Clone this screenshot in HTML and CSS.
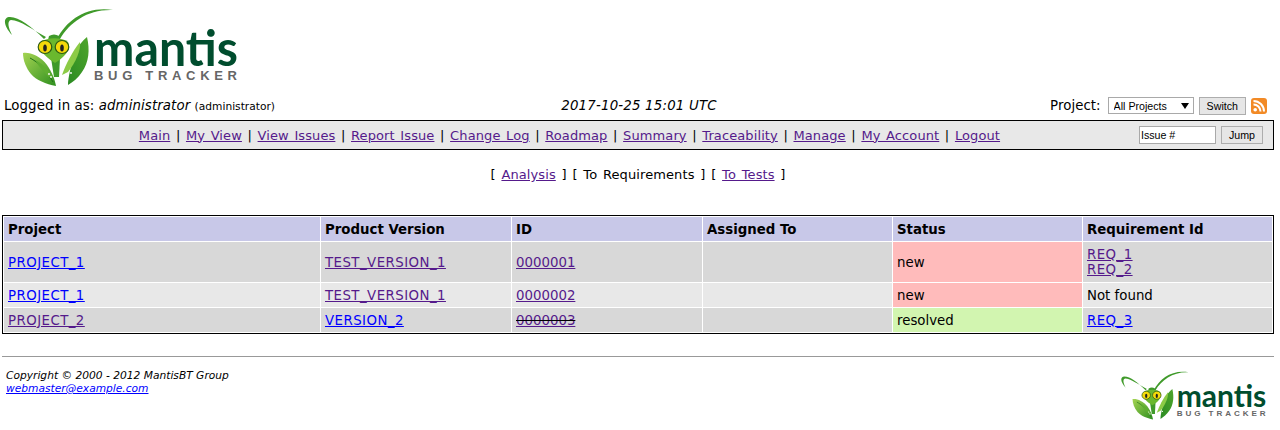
FILE: index.html
```html
<!DOCTYPE html>
<html lang="en">
<head>
<meta charset="utf-8">
<title>Mantis Bug Tracker</title>
<link rel="stylesheet" href="styles.css">
</head>
<body>
<header class="logo-row">
  <svg class="logo logo-big" viewBox="0 0 242 90" role="img" aria-label="Mantis Bug Tracker">
    <defs>
      <linearGradient id="leaf" x1="0" y1="0" x2="1" y2="1">
        <stop offset="0" stop-color="#a4d452"/>
        <stop offset="1" stop-color="#2f8f1f"/>
      </linearGradient>
      <linearGradient id="leaf2" x1="1" y1="0" x2="0" y2="1">
        <stop offset="0" stop-color="#4fa52c"/>
        <stop offset="1" stop-color="#2a8a22"/>
      </linearGradient>
      <g id="mantis-art">
        <path d="M44 39C32 27 19 17 10 17C3 17 3 25 12 35C8 27 7 21 11 20C20 20 33 30 46 37Z" fill="#3f9a2a"/>
        <path d="M57 39C67 20 86 6 113 10C88 9 70 22 60 39Z" fill="#3f9a2a"/>
        <path d="M23 53C30 52 40 56 47 65C52 72 55 80 56 86C46 84 36 80 31 74C26 68 23 60 23 53Z" fill="url(#leaf)"/>
        <path d="M30 58C38 62 46 70 53 82" stroke="#1f6e1a" stroke-width="1" fill="none"/>
        <path d="M87 37C90 50 89 62 82 72C78 78 73 82 68 85C68 78 71 65 75 53C78 46 82 41 87 37Z" fill="url(#leaf2)"/>
        <path d="M62 75C66 64 72 52 80 42C81 50 76 62 68 72Z" fill="#8ccb46"/>
        <path d="M51 58L60 58L59 77L54 77Z" fill="#3f9a2a"/>
        <path d="M35 60C42 63 49 70 53 77L49 77C44 72 39 67 35 60Z" fill="#5fae30"/>
        <path d="M49 36Q54 33 59 36L60 40L48 40Z" fill="#3f9a2a"/>
        <path d="M41 42C47 37 62 37 68 42C72 50 63 58 55 63C47 58 37 50 41 42Z" fill="#6ab82e"/>
        <ellipse cx="45" cy="47" rx="6.800" ry="6.500" fill="#f5d90a" stroke="#2d5b12" stroke-width="1.200"/>
        <ellipse cx="62" cy="47" rx="6.800" ry="6.500" fill="#f5d90a" stroke="#2d5b12" stroke-width="1.200"/>
        <ellipse cx="45" cy="48" rx="1.800" ry="3.600" fill="#222"/>
        <ellipse cx="62" cy="48" rx="1.800" ry="3.600" fill="#222"/>
        <circle cx="49" cy="74" r="0.900" fill="#fff"/>
        <circle cx="51" cy="77" r="0.900" fill="#fff"/>
        <circle cx="71" cy="73" r="0.900" fill="#fff"/>
        <text class="logo-word" x="94" y="66" textLength="144" lengthAdjust="spacingAndGlyphs">mantis</text>
        <text class="logo-sub" x="94" y="80" textLength="143" lengthAdjust="spacing">BUG TRACKER</text>
      </g>
    </defs>
    <use href="#mantis-art"/>
  </svg>
</header>

<div class="login-row">
  <div class="login">Logged in as: <em>administrator</em> <small>(administrator)</small></div>
  <div class="date">2017-10-25 15:01 UTC</div>
  <form class="project-form">
    <label for="project">Project:</label>
    <span class="select-wrap"><select id="project" class="select"><option>All Projects</option></select></span>
    <button type="button" class="btn">Switch</button>
    <svg class="rss" viewBox="0 0 16 16" aria-hidden="true">
      <rect width="16" height="16" rx="3" fill="#f28a26"/>
      <circle cx="4.200" cy="11.800" r="1.800" fill="#fff"/>
      <path d="M2.500 6.500a7 7 0 0 1 7 7M2.500 3a10.500 10.500 0 0 1 10.500 10.500" fill="none" stroke="#fff" stroke-width="2"/>
    </svg>
  </form>
</div>

<nav class="menu">
  <div class="menu-links">
    <a class="v" href="#">Main</a> | <a class="v" href="#">My View</a> | <a class="v" href="#">View Issues</a> | <a class="v" href="#">Report Issue</a> | <a class="v" href="#">Change Log</a> | <a class="v" href="#">Roadmap</a> | <a class="v" href="#">Summary</a> | <a class="v" href="#">Traceability</a> | <a class="v" href="#">Manage</a> | <a class="v" href="#">My Account</a> | <a class="v" href="#">Logout</a>
  </div>
  <form class="jump-form">
    <input class="issue" type="text" value="Issue #">
    <button type="button" class="btn">Jump</button>
  </form>
</nav>

<p class="subnav">[ <a class="v" href="#">Analysis</a> ] [ To Requirements ] [ <a class="v" href="#">To Tests</a> ]</p>

<table class="report">
  <colgroup>
    <col class="c1"><col class="c2"><col class="c2"><col class="c3"><col class="c3"><col>
  </colgroup>
  <thead>
    <tr><th>Project</th><th>Product Version</th><th>ID</th><th>Assigned To</th><th>Status</th><th>Requirement Id</th></tr>
  </thead>
  <tbody>
    <tr class="dark tall">
      <td><a class="b code" href="#">PROJECT_1</a></td>
      <td><a class="v code" href="#">TEST_VERSION_1</a></td>
      <td><a class="v" href="#">0000001</a></td>
      <td></td>
      <td class="new">new</td>
      <td><a class="v code" href="#">REQ_1</a><br><a class="v code" href="#">REQ_2</a></td>
    </tr>
    <tr class="light">
      <td><a class="b code" href="#">PROJECT_1</a></td>
      <td><a class="v code" href="#">TEST_VERSION_1</a></td>
      <td><a class="v" href="#">0000002</a></td>
      <td></td>
      <td class="new">new</td>
      <td>Not found</td>
    </tr>
    <tr class="dark">
      <td><a class="v code" href="#">PROJECT_2</a></td>
      <td><a class="b code" href="#">VERSION_2</a></td>
      <td><s><a class="v" href="#">0000003</a></s></td>
      <td></td>
      <td class="resolved">resolved</td>
      <td><a class="b code" href="#">REQ_3</a></td>
    </tr>
  </tbody>
</table>

<hr class="rule">

<footer class="footer">
  <address class="copy">Copyright © 2000 - 2012 MantisBT Group<br><a class="b" href="#">webmaster@example.com</a></address>
  <svg class="logo logo-small" viewBox="0 0 242 90" role="img" aria-label="Mantis Bug Tracker"><use href="#mantis-art"/></svg>
</footer>
</body>
</html>
```

FILE: styles.css
```css
html, body { background: #fff; }
body {
  margin: 0;
  padding: 0 6px 0 2px;
  font-family: "DejaVu Sans", Verdana, sans-serif;
  font-size: 13.330px;
  color: #000;
  overflow: hidden;
}
a.v { color: #551a8b; }
a.b { color: #0000ff; }
a.code { letter-spacing: 0.450px; }

.logo-row { height: 91px; }
.logo { display: block; }
.logo-big { width: 242px; height: 90px; margin-left: -2px; }
.logo-small { width: 151px; height: 56px; margin: -3px 5px 0 0; }
.logo-word { font-family: Lato, sans-serif; font-weight: 700; font-size: 50px; fill: #004d2e; }
.logo-sub { font-family: "Liberation Sans", sans-serif; font-weight: 700; font-size: 13px; fill: #666; }

.login-row {
  display: grid;
  grid-template-columns: 1fr auto 1fr;
  align-items: center;
  height: 29px;
  padding-left: 2px;
}
.login { letter-spacing: 0.100px; white-space: nowrap; }
.login small { font-size: 10.670px; letter-spacing: 0; }
.date { font-style: italic; letter-spacing: 0.200px; }
.project-form {
  display: flex;
  align-items: center;
  justify-content: flex-end;
  padding-right: 7px;
}
.project-form label { margin-right: 7px; letter-spacing: 0.050px; }
.select-wrap { position: relative; display: block; height: 17px; margin-right: 5px; }
.select-wrap::after {
  content: "";
  position: absolute;
  top: 6px;
  right: 5px;
  border-style: solid;
  border-width: 6px 4px 0;
  border-color: #000 transparent transparent;
}
.select {
  display: block;
  appearance: none;
  width: 86px;
  height: 17px;
  padding: 0 0 0 5px;
  font: 10.670px "Liberation Sans", sans-serif;
  color: #000;
  background: #fff;
  border: 1px solid #a9a9a9;
  border-radius: 0;
}
.btn {
  height: 18px;
  padding: 0 7px;
  font: 10.670px "Liberation Sans", sans-serif;
  color: #000;
  background: #e6e6e6;
  border: 1px solid #adadad;
  border-radius: 0;
}
.rss { width: 16px; height: 16px; margin-left: 5px; }

.menu {
  display: flex;
  align-items: center;
  height: 28px;
  background: #e8e8e8;
  border: 1px solid #000;
}
.menu-links { flex: 1; padding-right: 3px; text-align: center; font-size: 13px; letter-spacing: 0.100px; word-spacing: 1.350px; }
.jump-form {
  display: flex;
  align-items: center;
  gap: 5px;
  padding-right: 10px;
}
.issue {
  box-sizing: border-box;
  width: 77px;
  height: 18px;
  padding: 0 1px;
  font: 10.670px "Liberation Sans", sans-serif;
  border: 1px solid #a9a9a9;
  border-radius: 0;
}

.subnav {
  margin: 17px 0 32px;
  height: 16px;
  text-align: center;
  font-size: 13px;
  letter-spacing: 0.100px;
  word-spacing: 1.500px;
}

.report {
  box-sizing: border-box;
  width: 1272px;
  table-layout: fixed;
  border: 1px solid #000;
  border-spacing: 1px;
  background: #fff;
}
.c1 { width: 316px; }
.c2 { width: 190px; }
.c3 { width: 189px; }
.report th, .report td {
  padding: 0 0 0 4px;
  text-align: left;
}
.report th { height: 24px; font-weight: 700; background: #c8c8e8; }
.report td { height: 24px; }
.tall td { height: 40px; }
.dark td { background: #d8d8d8; }
.light td { background: #e8e8e8; }
.report td.new { background: #ffbbbb; }
.report td.resolved { background: #d2f5b0; }

.rule {
  margin: 22px 0 0;
  border: 0;
  height: 1px;
  background: #999;
}
.footer {
  display: flex;
  justify-content: space-between;
  align-items: flex-start;
  padding-top: 12px;
}
.copy {
  padding-left: 4px;
  font-size: 10.670px;
  line-height: 13px;
  font-style: italic;
}
```
